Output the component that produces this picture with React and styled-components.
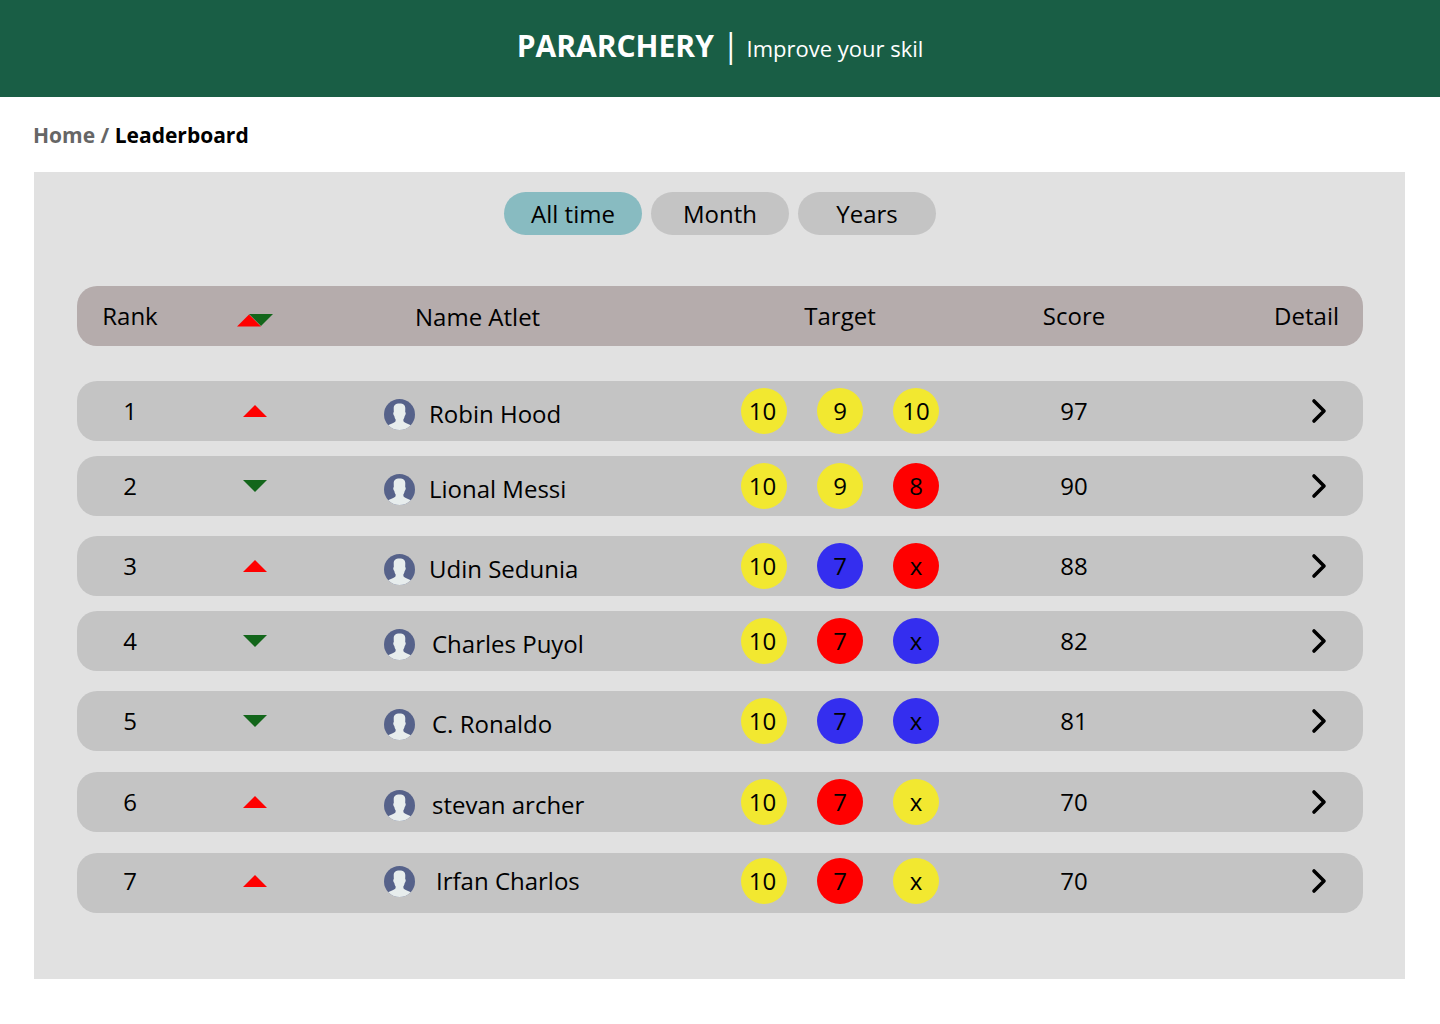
import React, { useState } from "react";
import styled, { createGlobalStyle } from "styled-components";

const colors = {
  brand: "#195e45",
  panel: "#e1e1e1",
  bar: "#c4c4c4",
  head: "#b5acac",
  active: "#88bbc1",
  up: "#ff0000",
  down: "#13661b",
  yellow: "#f2e830",
  red: "#ff0000",
  blue: "#342eef",
};

const GlobalStyle = createGlobalStyle`
  *, *::before, *::after { box-sizing: border-box; }
  body {
    margin: 0;
    background: #fff;
    color: #000;
    font-family: "Open Sans", "Noto Sans", sans-serif;
    font-size: 24px;
    line-height: 32px;
  }
`;

const Header = styled.header`
  display: flex;
  justify-content: center;
  align-items: baseline;
  padding: 24px 16px 29px;
  background: ${colors.brand};
  color: #fff;
`;

const Brand = styled.h1`
  margin: 0;
  font-size: 30px;
  line-height: 44px;
  font-weight: 700;
`;

const Divider = styled.span`
  margin: 0 7px 0 8px;
  font-size: 32px;
  line-height: 32px;
`;

const Tagline = styled.p`
  margin: 0;
  font-size: 22px;
  line-height: 32px;
`;

const Breadcrumb = styled.nav`
  padding: 22px 33px 21px;
  font-size: 21px;
  font-weight: 700;
  color: #666;
`;

const Crumb = styled.a`
  color: inherit;
  text-decoration: none;
`;

const Current = styled.span`
  color: #000;
`;

const Panel = styled.main`
  margin: 0 35px 45px 34px;
  padding: 20px 42px 66px 43px;
  background: ${colors.panel};
`;

const Filters = styled.div`
  display: flex;
  justify-content: center;
  gap: 9px;
  margin-bottom: 51px;
`;

const FilterButton = styled.button`
  width: 138px;
  height: 43px;
  padding: 0;
  border: 0;
  border-radius: 22px;
  background: ${(p) => (p.$active ? colors.active : colors.bar)};
  color: inherit;
  font: inherit;
  cursor: pointer;
`;

const Table = styled.table`
  display: block;
  width: 100%;
`;

const Head = styled.thead`
  display: block;
  margin-bottom: 35px;
`;

const Body = styled.tbody`
  display: block;
`;

const Row = styled.tr`
  display: grid;
  grid-template-columns: 106fr 144fr 362fr 302fr 166fr 206fr;
  align-items: center;
  height: 60px;
  margin-bottom: ${(p) => p.$space || 0}px;
  padding-bottom: ${(p) => (p.$raised ? 4 : 0)}px;
  border-radius: 20px;
  background: ${(p) => (p.$head ? colors.head : colors.bar)};
`;

const HeadCell = styled.th`
  padding: 0;
  font-weight: 400;
  text-align: center;
  white-space: nowrap;
`;

const TrendHead = styled(HeadCell)`
  padding-top: 8px;
`;

const NameHead = styled(HeadCell)`
  padding: 2px 0 0 88px;
  text-align: left;
`;

const DetailHead = styled(HeadCell)`
  padding-right: 24px;
  text-align: right;
`;

const Cell = styled.td`
  padding: 0;
  text-align: center;
`;

const NameCell = styled(Cell)`
  display: flex;
  align-items: center;
  gap: ${(p) => p.$gap}px;
  padding-top: ${(p) => (p.$raised ? 0 : 6)}px;
  padding-left: 57px;
`;

const TargetCell = styled(Cell)`
  display: flex;
  justify-content: center;
  gap: 30px;
`;

const DetailCell = styled(Cell)`
  display: flex;
  justify-content: flex-end;
  padding-right: 32px;
`;

const Shot = styled.span`
  display: flex;
  justify-content: center;
  align-items: center;
  width: 46px;
  height: 46px;
  padding-right: ${(p) => (p.$first ? 3 : 0)}px;
  border-radius: 50%;
  background: ${(p) => colors[p.$tone]};
`;

const DetailButton = styled.button`
  display: flex;
  padding: 0;
  border: 0;
  background: none;
  color: inherit;
  cursor: pointer;
`;

const Icon = styled.svg`
  display: block;
  flex: none;
`;

const TrendIcon = styled(Icon)`
  margin: 0 auto;
`;

function Trend({ up }) {
  return (
    <TrendIcon width="24" height="12" viewBox="0 0 24 12" role="img" aria-label={up ? "Up" : "Down"}>
      {up ? <path d="M12 0 24 12H0Z" fill={colors.up} /> : <path d="M0 0H24L12 12Z" fill={colors.down} />}
    </TrendIcon>
  );
}

function Avatar({ id }) {
  return (
    <Icon width="31" height="31" viewBox="0 0 31 31" aria-hidden="true">
      <clipPath id={id}>
        <circle cx="15.5" cy="15.5" r="15.5" />
      </clipPath>
      <g clipPath={`url(#${id})`}>
        <rect width="31" height="31" fill="#56628a" />
        <path
          fill="#e7eded"
          d="M15.5 4.6C11.400 4.600 9.700 6.300 9.700 9.500L9.800 13C8.800 13.400 9.200 16.300 10.300 16.900C10.600 18.500 11 19.500 11.600 20.300V22C10.800 24 7 24.600 4 26.300V31H27V26.300C24 24.600 20.200 24 19.400 22V20.300C20 19.500 20.400 18.500 20.700 16.900C21.800 16.300 22.200 13.400 21.200 13L21.300 9.500C21.300 6.300 19.600 4.600 15.500 4.600Z"
        />
      </g>
    </Icon>
  );
}

const filters = ["All time", "Month", "Years"];

const athletes = [
  { rank: 1, up: true, name: "Robin Hood", gap: 14, shots: [["10", "yellow"], ["9", "yellow"], ["10", "yellow"]], score: 97, space: 15 },
  { rank: 2, up: false, name: "Lional Messi", gap: 14, shots: [["10", "yellow"], ["9", "yellow"], ["8", "red"]], score: 90, space: 20 },
  { rank: 3, up: true, name: "Udin Sedunia", gap: 14, shots: [["10", "yellow"], ["7", "blue"], ["x", "red"]], score: 88, space: 15 },
  { rank: 4, up: false, name: "Charles Puyol", gap: 17, shots: [["10", "yellow"], ["7", "red"], ["x", "blue"]], score: 82, space: 20 },
  { rank: 5, up: false, name: "C. Ronaldo", gap: 17, shots: [["10", "yellow"], ["7", "blue"], ["x", "blue"]], score: 81, space: 21 },
  { rank: 6, up: true, name: "stevan archer", gap: 17, shots: [["10", "yellow"], ["7", "red"], ["x", "yellow"]], score: 70, space: 21 },
  { rank: 7, up: true, name: "Irfan Charlos", gap: 21, raised: true, shots: [["10", "yellow"], ["7", "red"], ["x", "yellow"]], score: 70, space: 0 },
];

export default function App() {
  const [active, setActive] = useState(filters[0]);
  return (
    <>
      <GlobalStyle />
      <Header>
        <Brand>PARARCHERY</Brand>
        <Divider>|</Divider>
        <Tagline>Improve your skil</Tagline>
      </Header>
      <Breadcrumb aria-label="Breadcrumb">
        <Crumb href="#home">Home</Crumb> / <Current aria-current="page">Leaderboard</Current>
      </Breadcrumb>
      <Panel>
        <Filters>
          {filters.map((label) => (
            <FilterButton
              key={label}
              type="button"
              $active={label === active}
              aria-pressed={label === active}
              onClick={() => setActive(label)}
            >
              {label}
            </FilterButton>
          ))}
        </Filters>
        <Table>
          <Head>
            <Row $head>
              <HeadCell scope="col">Rank</HeadCell>
              <TrendHead scope="col">
                <TrendIcon width="36" height="13" viewBox="0 0 36 13" role="img" aria-label="Trend">
                  <path d="M12 0H36L24 12Z" fill={colors.down} />
                  <path d="M12 0.5 24 12.500H0Z" fill={colors.up} />
                </TrendIcon>
              </TrendHead>
              <NameHead scope="col">Name Atlet</NameHead>
              <HeadCell scope="col">Target</HeadCell>
              <HeadCell scope="col">Score</HeadCell>
              <DetailHead scope="col">Detail</DetailHead>
            </Row>
          </Head>
          <Body>
            {athletes.map((a) => (
              <Row key={a.rank} $space={a.space} $raised={a.raised}>
                <Cell>{a.rank}</Cell>
                <Cell>
                  <Trend up={a.up} />
                </Cell>
                <NameCell $gap={a.gap} $raised={a.raised}>
                  <Avatar id={`avatar-${a.rank}`} />
                  {a.name}
                </NameCell>
                <TargetCell>
                  {a.shots.map(([value, tone], i) => (
                    <Shot key={i} $tone={tone} $first={i === 0}>
                      {value}
                    </Shot>
                  ))}
                </TargetCell>
                <Cell>{a.score}</Cell>
                <DetailCell>
                  <DetailButton type="button" aria-label={`Detail of ${a.name}`}>
                    <Icon width="24" height="28" viewBox="0 0 24 28" fill="none" aria-hidden="true">
                      <path d="M7 4 17 14 7 24" stroke="#000" strokeWidth="3.600" strokeLinecap="round" strokeLinejoin="round" />
                    </Icon>
                  </DetailButton>
                </DetailCell>
              </Row>
            ))}
          </Body>
        </Table>
      </Panel>
    </>
  );
}
